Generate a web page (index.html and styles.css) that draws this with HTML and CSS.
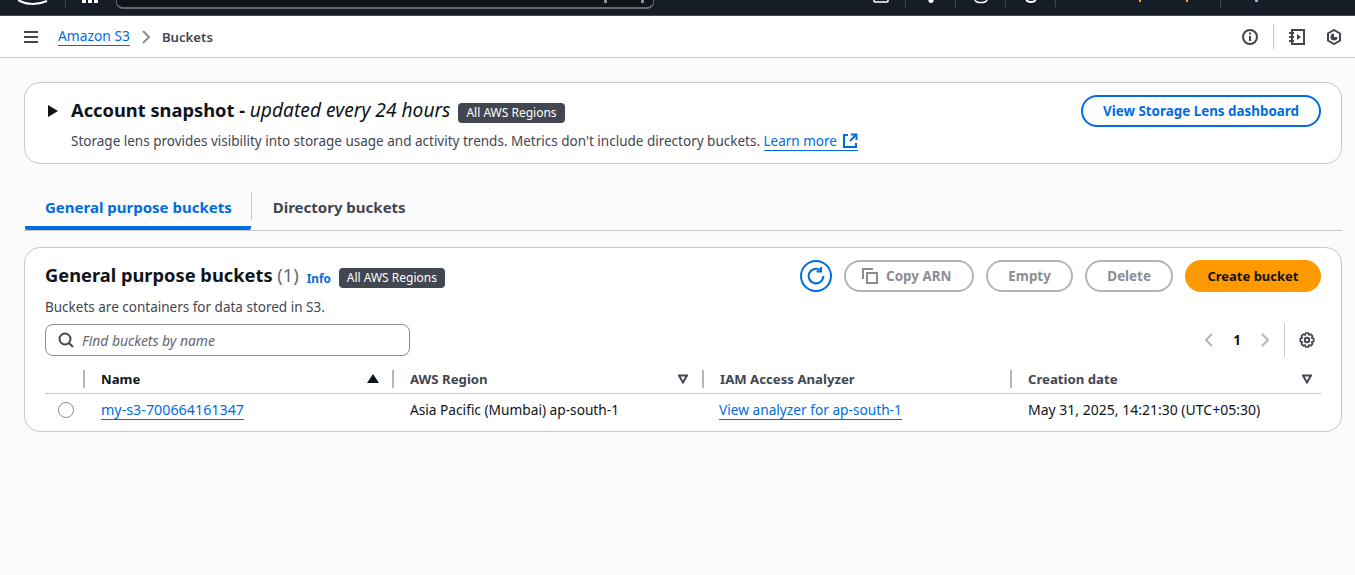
FILE: index.html

```html
<!DOCTYPE html>
<html>
<head>
  <title>S3 buckets</title>
  <link rel="stylesheet" href="styles.css">
</head>
<body>
  <header class="topbar">
    <svg class="logo" width="30" height="6" viewBox="0 0 30 6"><path d="M0 0c8 5 20 5 29 1" fill="none" stroke="#fff" stroke-width="2"/></svg>
    <span class="topbar-sep"></span>
    <div class="grid-icon"><i></i><i></i><i></i></div>
    <div class="search-box"><span class="search-hint"></span><span class="search-hint"></span></div>
    <div class="top-icons">
      <span class="top-icon"><svg width="16" height="6" viewBox="0 0 16 6"><path d="M1 0v1a1 1 0 0 0 1 1h12a1 1 0 0 0 1-1V0" fill="none" stroke="#fff" stroke-width="1.6"/></svg></span>
      <span class="top-icon"><svg width="16" height="6" viewBox="0 0 16 6"><circle cx="8" cy="0.5" r="2.5" fill="#fff"/></svg></span>
      <span class="top-icon"><svg width="16" height="6" viewBox="0 0 16 6"><path d="M2 0c1 3.4 11 3.4 12 0" fill="none" stroke="#fff" stroke-width="1.6"/></svg></span>
      <span class="top-icon"><svg width="16" height="6" viewBox="0 0 16 6"><path d="M3.5 0c1 2.6 8 2.6 9 0" fill="none" stroke="#fff" stroke-width="2"/></svg></span>
      <span class="top-icon wide"><i class="speck speck-one"></i><i class="speck speck-two"></i></span>
      <span class="top-icon last"><i class="speck speck-three"></i></span>
    </div>
  </header>

  <nav class="subbar">
    <svg class="menu-icon" width="16" height="16" viewBox="0 0 16 16"><path d="M1 3h14M1 8h14M1 13h14" stroke="#424650" stroke-width="2" fill="none"/></svg>
    <a class="crumb-link">Amazon S3</a>
    <svg class="crumb-arrow" width="16" height="16" viewBox="0 0 16 16"><path d="M5 2l6 6-6 6" stroke="#8c8c94" stroke-width="2" fill="none"/></svg>
    <span class="crumb-current">Buckets</span>
    <div class="subbar-right">
      <svg width="16" height="16" viewBox="0 0 16 16" fill="none" stroke="#424650" stroke-width="2"><circle cx="8" cy="8" r="7"/><path d="M8 7v5M8 3.5v2"/></svg>
      <span class="subbar-sep"></span>
      <svg class="book-icon" width="16" height="16" viewBox="0 0 16 16" fill="none" stroke="#424650" stroke-width="2"><path d="M3 1h12v14H3zM0 4h5M0 8h5M0 12h5"/><path d="M8 5l4 3-4 3z" fill="#424650" stroke="none"/></svg>
      <svg width="16" height="16" viewBox="0 0 16 16" fill="none" stroke="#424650" stroke-width="2"><path d="M8 1l6 3.5v7L8 15l-6-3.5v-7z"/><path d="M8 4.5A3.5 3.5 0 1 0 11.5 8H8z" fill="#424650" stroke="none"/></svg>
    </div>
  </nav>

  <main class="content">
    <section class="card snapshot">
      <div class="snapshot-main">
        <div class="snapshot-title">
          <svg class="caret" width="10" height="12" viewBox="0 0 10 12"><path d="M0 0l10 6-10 6z" fill="#0f141a"/></svg>
          <h2>Account snapshot - <em>updated every 24 hours</em></h2>
          <span class="badge">All AWS Regions</span>
        </div>
        <p class="snapshot-desc">Storage lens provides visibility into storage usage and activity trends. Metrics don't include directory buckets. <a class="link">Learn more <svg class="ext-icon" width="16" height="16" viewBox="0 0 16 16" fill="none" stroke="#006ce0" stroke-width="2"><path d="M6 2H2v12h12v-4"/><path d="M9 1.5h5.5V7M14 2L8 8"/></svg></a></p>
      </div>
      <button class="btn-outline">View Storage Lens dashboard</button>
    </section>

    <div class="tabs">
      <div class="tab active">General purpose buckets</div>
      <span class="tab-sep"></span>
      <div class="tab tab-second">Directory buckets</div>
    </div>

    <section class="card buckets">
      <div class="buckets-head">
        <div>
          <div class="buckets-title">
            <h2>General purpose buckets <span class="count">(1)</span></h2>
            <a class="info">Info</a>
            <span class="badge">All AWS Regions</span>
          </div>
          <p class="buckets-desc">Buckets are containers for data stored in S3.</p>
        </div>
        <div class="actions">
          <button class="btn-refresh"><svg width="18" height="18" viewBox="0 0 16 16" fill="none" stroke="#006ce0" stroke-width="1.8"><path d="M14.5 8A6.5 6.5 0 1 1 12 2.9"/><path d="M12.5 0v4h-4"/></svg></button>
          <button class="btn-disabled"><svg width="16" height="16" viewBox="0 0 16 16" fill="none" stroke="#8c8c94" stroke-width="2"><path d="M5 5h10v10H5z"/><path d="M1 11V1h10"/></svg>Copy ARN</button>
          <button class="btn-disabled">Empty</button>
          <button class="btn-disabled btn-delete">Delete</button>
          <button class="btn-primary">Create bucket</button>
        </div>
      </div>

      <div class="filter-row">
        <div class="search">
          <svg width="16" height="16" viewBox="0 0 16 16" fill="none" stroke="#424650" stroke-width="2"><circle cx="7" cy="7" r="5.5"/><path d="M11 11l4 4"/></svg>
          <span>Find buckets by name</span>
        </div>
        <div class="pager">
          <svg width="16" height="16" viewBox="0 0 16 16" fill="none" stroke="#b4b4bb" stroke-width="2"><path d="M11 2L5 8l6 6"/></svg>
          <b>1</b>
          <svg width="16" height="16" viewBox="0 0 16 16" fill="none" stroke="#b4b4bb" stroke-width="2"><path d="M5 2l6 6-6 6"/></svg>
          <span class="pager-sep"></span>
          <svg width="16" height="16" viewBox="0 0 16 16" fill="none" stroke="#424650" stroke-width="2"><circle cx="8" cy="8" r="2.2"/><path d="M6.6 1h2.8l.5 2 1.8-.8 1.9 2-.9 1.8 2 .6v2.8l-2 .6.9 1.8-1.9 2-1.8-.8-.5 2H6.6l-.5-2-1.8.8-1.9-2 .9-1.8-2-.6V6.6l2-.6-.9-1.8 1.9-2 1.8.8z" stroke-width="1.7" stroke-linejoin="round"/></svg>
        </div>
      </div>

      <table class="bucket-table">
        <thead>
          <tr>
            <th class="col-radio"></th>
            <th class="col-name"><div class="th-inner sorted">Name <svg width="12" height="10" viewBox="0 0 12 10"><path d="M6 0l6 9H0z" fill="#0f141a"/></svg></div></th>
            <th class="col-region"><div class="th-inner">AWS Region <svg width="10" height="10" viewBox="0 0 10 10"><path d="M1 1.5h8L5 8.5z" fill="none" stroke="#424650" stroke-width="2"/></svg></div></th>
            <th class="col-iam"><div class="th-inner">IAM Access Analyzer</div></th>
            <th class="col-date"><div class="th-inner">Creation date <svg width="10" height="10" viewBox="0 0 10 10"><path d="M1 1.5h8L5 8.5z" fill="none" stroke="#424650" stroke-width="2"/></svg></div></th>
          </tr>
        </thead>
        <tbody>
          <tr>
            <td class="col-radio"><span class="radio"></span></td>
            <td><a class="link link-name">my-s3-700664161347</a></td>
            <td>Asia Pacific (Mumbai) ap-south-1</td>
            <td class="cell-iam"><a class="link">View analyzer for ap-south-1</a></td>
            <td class="cell-date">May 31, 2025, 14:21:30 (UTC+05:30)</td>
          </tr>
        </tbody>
      </table>
    </section>
  </main>
</body>
</html>
```

FILE: styles.css

```css
* {
  box-sizing: border-box;
}
body {
  margin: 0;
  height: 575px;
  overflow: hidden;
  font-family: "Noto Sans", Arial, sans-serif;
  font-size: 14px;
  color: #0f141a;
  background: #fbfbfb;
}
h2, p {
  margin: 0;
}
button {
  font-family: inherit;
}
.topbar {
  height: 16px;
  background: #161d26;
  border-bottom: 1px solid #424650;
  display: flex;
  align-items: flex-start;
  overflow: hidden;
}
.logo {
  margin-left: 18px;
}
.topbar-sep {
  width: 1px;
  height: 7px;
  background: #424650;
  margin-left: 17px;
}
.grid-icon {
  display: flex;
  gap: 2px;
  margin-left: 16px;
}
.grid-icon i {
  width: 4px;
  height: 3px;
  background: #fff;
}
.search-box {
  width: 538px;
  height: 11px;
  margin-left: 18px;
  margin-top: -2px;
  padding: 0 9px 0 487px;
  display: flex;
  justify-content: space-between;
  background: #0f141a;
  border: 1px solid #656871;
  border-bottom-width: 2px;
  border-radius: 0 0 7px 7px;
}
.search-hint {
  height: 3px;
  width: 3px;
  margin-top: 1px;
  background: #8c8c94;
}
.top-icons {
  display: flex;
  margin-left: 202px;
}
.top-icon {
  position: relative;
  width: 50px;
  height: 7px;
  border-right: 1px solid #424650;
  display: flex;
  justify-content: center;
}
.top-icon.wide {
  width: 165px;
}
.top-icon.last {
  border-right: 0;
}
.speck {
  position: absolute;
  top: 0;
  width: 2px;
  height: 2px;
  background: #f5a63c;
}
.speck-one {
  left: 83px;
}
.speck-two {
  left: 130px;
}
.speck-three {
  left: 34px;
  width: 3px;
  background: #8fb4d8;
}
.subbar {
  height: 42px;
  background: #fff;
  border-bottom: 1px solid #c6c6cd;
  display: flex;
  align-items: center;
  padding: 0 13px 0 23px;
}
.menu-icon {
  margin-right: 19px;
}
.crumb-link {
  color: #006ce0;
  font-size: 13.8px;
  border-bottom: 1px solid #006ce0;
  line-height: 18px;
}
.crumb-arrow {
  margin: 0 8px 0 8px;
}
.crumb-current {
  color: #424650;
  font-size: 13.2px;
  font-weight: 600;
}
.subbar-right {
  margin-left: auto;
  display: flex;
  align-items: center;
  gap: 15px;
}
.book-icon {
  margin-right: 6px;
}
.subbar-sep {
  width: 1px;
  height: 25px;
  background: #c6c6cd;
}
.content {
  padding: 24px 13px 0 24px;
}
.card {
  background: #fff;
  border: 1px solid #c6c6cd;
  border-radius: 16px;
}
.snapshot {
  height: 82px;
  display: flex;
  justify-content: space-between;
  padding: 12px 20px 0 23px;
}
.snapshot-title {
  display: flex;
  align-items: center;
  height: 30px;
}
.caret {
  margin-top: 2px;
  margin-right: 13px;
}
.snapshot-title h2 {
  font-size: 18.3px;
  font-weight: 700;
  margin-top: -2px;
  margin-right: 8px;
}
.snapshot-title em {
  font-size: 19.2px;
  font-weight: 400;
}
.badge {
  background: #424650;
  color: #fff;
  font-size: 12px;
  line-height: 20px;
  margin-top: 6px;
  padding: 0 8px;
  border-radius: 4px;
}
.snapshot-desc {
  margin: 7px 0 0 23px;
  color: #424650;
  font-size: 13.5px;
}
.link {
  color: #006ce0;
  border-bottom: 1px solid #006ce0;
}
.ext-icon {
  vertical-align: -2px;
  margin-left: 2px;
  margin-bottom: -1px;
}
.btn-outline {
  height: 32px;
  padding: 0 20px;
  background: #fff;
  color: #006ce0;
  border: 2px solid #006ce0;
  border-radius: 20px;
  font-size: 13.4px;
  font-weight: 700;
}
.tabs {
  display: flex;
  align-items: flex-start;
  height: 39px;
  margin-top: 28px;
  padding-left: 1px;
  border-bottom: 1px solid #c6c6cd;
}
.tab {
  height: 38px;
  line-height: 30px;
  padding: 0 20px;
  font-size: 15px;
  font-weight: 700;
  color: #424650;
}
.tab.active {
  padding-right: 19px;
  color: #006ce0;
  border-bottom: 4px solid #006ce0;
  border-radius: 0 0 2px 2px;
}
.tab.tab-second {
  padding-left: 21px;
}
.tab-sep {
  width: 1px;
  height: 28px;
  background: #c6c6cd;
}
.buckets {
  height: 185px;
  margin-top: 16px;
  padding: 12px 20px 0;
}
.buckets-head {
  display: flex;
  justify-content: space-between;
}
.buckets-title {
  display: flex;
  align-items: center;
  height: 30px;
}
.buckets-title h2 {
  font-size: 18.3px;
  font-weight: 700;
  margin-top: -2px;
}
.count {
  font-weight: 400;
  color: #656871;
}
.info {
  margin: 6px 8px 0;
  color: #006ce0;
  font-size: 11.7px;
  font-weight: 700;
}
.buckets-desc {
  color: #424650;
  font-size: 13.5px;
  margin-top: 8px;
}
.actions {
  display: flex;
  gap: 12px;
  align-items: flex-start;
}
.actions button {
  height: 32px;
  border-radius: 20px;
  font-size: 13.4px;
  font-weight: 700;
}
.actions .btn-refresh {
  width: 32px;
  padding: 0;
  background: #fff;
  border: 2px solid #006ce0;
  display: flex;
  align-items: center;
  justify-content: center;
}
.btn-disabled {
  display: flex;
  align-items: center;
  gap: 8px;
  padding: 0 20.5px;
  background: #fff;
  color: #8c8c94;
  border: 2px solid #b4b4bb;
}
.btn-disabled svg {
  margin-left: -4px;
}
.btn-disabled.btn-delete {
  padding: 0 20px;
}
.actions .btn-primary {
  padding: 0 20.5px;
  background: #ff9900;
  color: #0f141a;
  border: 2px solid #ff9900;
  font-size: 13px;
}
.filter-row {
  display: flex;
  justify-content: space-between;
  margin-top: 8px;
}
.search {
  width: 365px;
  height: 32px;
  display: flex;
  align-items: center;
  gap: 8px;
  padding: 0 12px;
  background: #fff;
  border: 1px solid #8c8c94;
  border-radius: 8px;
  color: #656871;
  font-size: 13.9px;
  font-style: italic;
}
.pager {
  display: flex;
  align-items: center;
  gap: 12px;
  height: 32px;
  padding-right: 6px;
}
.pager b {
  font-size: 13.4px;
  width: 16px;
  text-align: center;
}
.pager-sep {
  width: 1px;
  height: 34px;
  margin-left: -1px;
  margin-right: 2px;
  background: #c6c6cd;
}
.bucket-table {
  width: 100%;
  margin-top: 9px;
  border-collapse: collapse;
  table-layout: fixed;
}
.bucket-table th {
  height: 28px;
  padding: 0;
  border-bottom: 1px solid #c6c6cd;
  text-align: left;
  font-size: 13.2px;
  font-weight: 700;
  color: #424650;
}
.bucket-table .col-name .th-inner {
  color: #0f141a;
}
.th-inner {
  display: flex;
  align-items: center;
  justify-content: space-between;
  height: 18px;
  padding: 0 0 0 16px;
  border-left: 2px solid #b4b4bb;
}
.th-inner svg {
  margin-right: 14px;
}
.col-date .th-inner svg {
  margin-right: 9px;
}
.sorted svg {
  margin-right: 13px;
}
.col-radio {
  width: 38px;
}
.col-name {
  width: 309px;
}
.col-region {
  width: 310px;
}
.col-iam {
  width: 308px;
}
.bucket-table td {
  height: 34px;
  padding: 0 0 2px 18px;
  font-size: 13.7px;
  color: #0f141a;
}
.bucket-table td.col-radio {
  padding: 0 0 0 13px;
}
.bucket-table td.cell-iam {
  padding-left: 17px;
}
.bucket-table .cell-date {
  font-size: 14px;
}
.bucket-table .link-name {
  font-size: 14.3px;
}
.radio {
  display: block;
  width: 16px;
  height: 16px;
  border: 1px solid #8c8c94;
  border-radius: 50%;
}
```
